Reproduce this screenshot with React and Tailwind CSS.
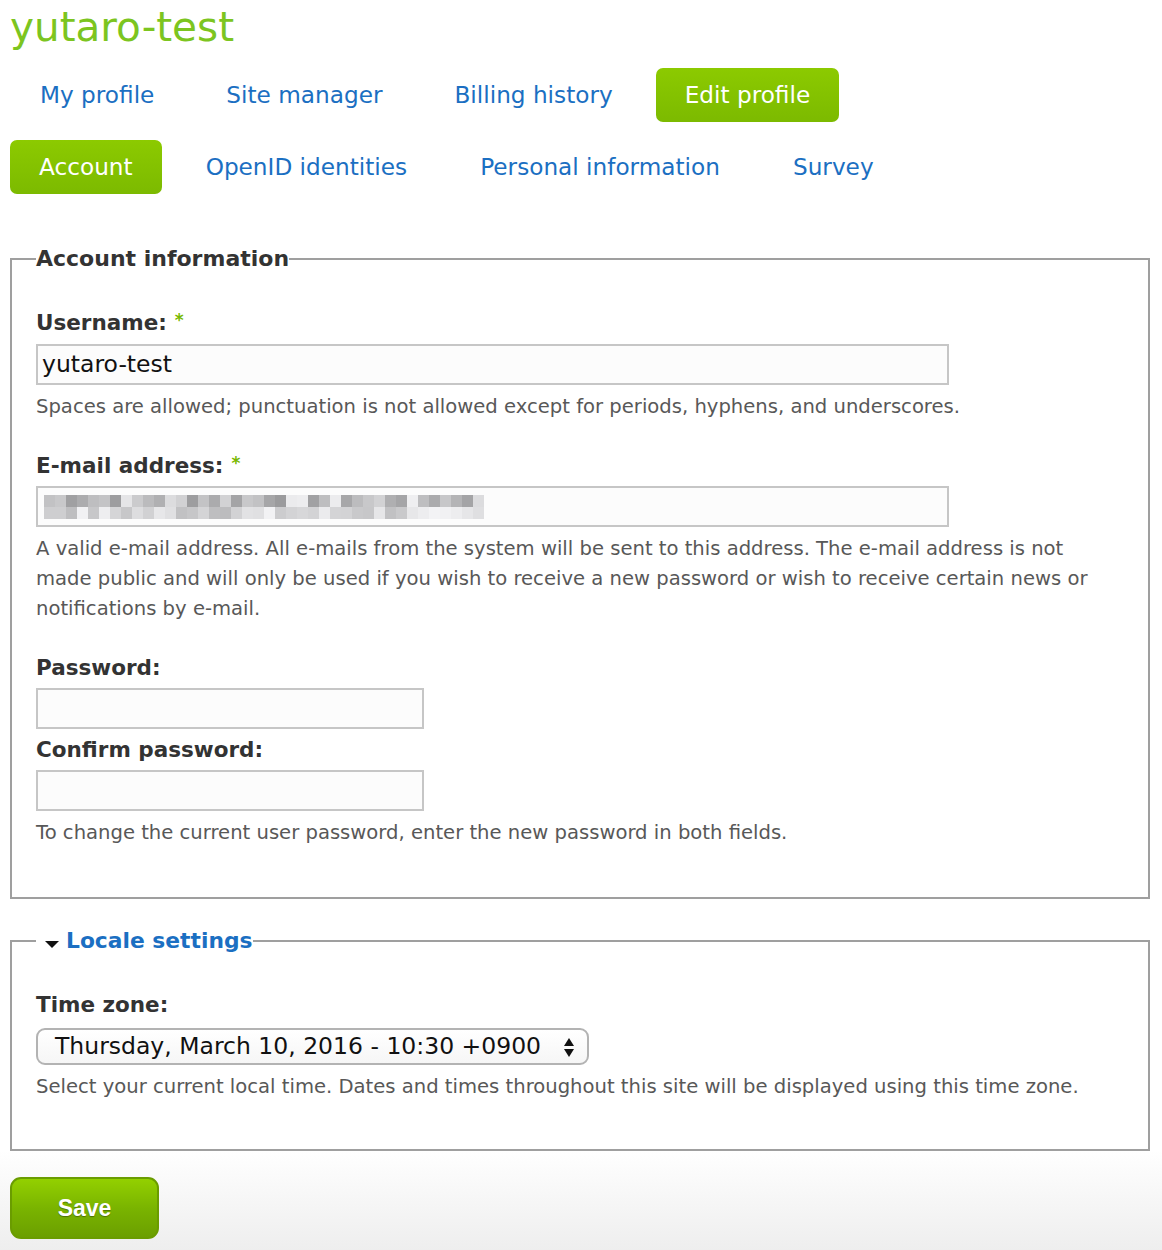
import React from "react";

const font = { fontFamily: '"DejaVu Sans", Verdana, sans-serif' };

function Tab({ label, active }) {
  return active ? (
    <div className="flex h-[54px] items-center rounded-[7px] bg-[linear-gradient(to_bottom,#8cca00,#7cba00)] px-[29px] text-[23.2px] text-white">
      {label}
    </div>
  ) : (
    <div className="flex h-[54px] items-center px-[29px] text-[23.2px] text-[#1b6fc2]">{label}</div>
  );
}

function Label({ children, required }) {
  return (
    <div className="h-[26px] text-[21.5px] font-bold leading-[26px] text-[#333]">
      {children}
      {required && <span className="ml-[8px] align-top text-[17px] leading-[20px] text-[#78b800]">*</span>}
    </div>
  );
}

function Desc({ children, className = "" }) {
  return <div className={"text-[19.6px] leading-[30px] text-[#585858] " + className}>{children}</div>;
}

function TextBox({ width, children }) {
  return (
    <div
      className="flex h-[41px] items-center border-2 border-[#c6c6c6] bg-[#fcfcfc] px-[4px] text-[23.5px] text-[#111]"
      style={{ width }}
    >
      {children}
    </div>
  );
}

function Mosaic() {
  const cells = [];
  let seed = 7;
  const rnd = () => {
    seed = (seed * 9301 + 49297) % 233280;
    return seed / 233280;
  };
  for (let r = 0; r < 2; r++) {
    const row = [];
    for (let c = 0; c < 40; c++) {
      const base = r === 0 ? 150 + rnd() * 90 : 185 + rnd() * 60;
      const v = Math.round(base);
      row.push(<div key={c} className="h-[12px] w-[11px]" style={{ backgroundColor: `rgb(${v},${v},${v + 2})` }} />);
    }
    cells.push(
      <div key={r} className="flex">
        {row}
      </div>
    );
  }
  return <div className="flex flex-col">{cells}</div>;
}

export default function App() {
  return (
    <div
      className="min-h-[1250px] bg-[linear-gradient(to_bottom,#ffffff_1150px,#eeeeee_1250px)] pl-[10px] pr-[12px]"
      style={font}
    >
      <div className="h-[48px] pt-[3px] text-[40.5px] leading-[48px] text-[#7cc520]">yutaro-test</div>

      <div className="mt-[20px] flex gap-[14px] pl-[1px]">
        <Tab label="My profile" />
        <Tab label="Site manager" />
        <Tab label="Billing history" />
        <Tab label="Edit profile" active />
      </div>
      <div className="mt-[18px] flex gap-[15px]">
        <Tab label="Account" active />
        <Tab label="OpenID identities" />
        <Tab label="Personal information" />
        <Tab label="Survey" />
      </div>

      <fieldset className="mt-[52px] border-2 border-[#9f9f9f] px-[24px] pb-[49px] pt-[38px]">
        <legend className="h-[26px] text-[22px] font-bold leading-[26px] text-[#333]">Account information</legend>

        <Label required>Username:</Label>
        <div className="mt-[8px]">
          <TextBox width={913}>yutaro-test</TextBox>
        </div>
        <Desc className="mt-[7px]">
          Spaces are allowed; punctuation is not allowed except for periods, hyphens, and underscores.
        </Desc>

        <div className="mt-[31px]">
          <Label required>E-mail address:</Label>
        </div>
        <div className="mt-[7px]">
          <TextBox width={913}>
            <div className="pl-[2px]">
              <Mosaic />
            </div>
          </TextBox>
        </div>
        <Desc className="mt-[7px]">
          A valid e-mail address. All e-mails from the system will be sent to this address. The e-mail address is not
          made public and will only be used if you wish to receive a new password or wish to receive certain news or
          notifications by e-mail.
        </Desc>

        <div className="mt-[31px]">
          <Label>Password:</Label>
        </div>
        <div className="mt-[7px]">
          <TextBox width={388} />
        </div>
        <div className="mt-[8px]">
          <Label>Confirm password:</Label>
        </div>
        <div className="mt-[7px]">
          <TextBox width={388} />
        </div>
        <Desc className="mt-[7px]">To change the current user password, enter the new password in both fields.</Desc>
      </fieldset>

      <fieldset className="mt-[29px] border-2 border-[#9f9f9f] px-[24px] pb-[47px] pt-[38px]">
        <legend className="flex h-[26px] items-center pl-[9px] text-[21.8px] font-bold leading-[26px] text-[#1b6fc2]">
          <svg width="14" height="10" viewBox="0 0 14 10" className="mr-[7px] mt-[6px]">
            <polygon points="0,2 14,2 7,9" fill="#111" />
          </svg>
          Locale settings
        </legend>

        <Label>Time zone:</Label>
        <div className="mt-[10px] flex h-[37px] w-[553px] items-center justify-between rounded-[9px] border-2 border-[#b3b3b3] bg-[linear-gradient(to_bottom,#ffffff,#f6f6f6)] pl-[17px] pr-[12px] text-[23.5px] text-[#111]">
          <span>Thursday, March 10, 2016 - 10:30 +0900</span>
          <svg width="12" height="22" viewBox="0 0 12 22">
            <polygon points="6,2 11,10 1,10" fill="#111" />
            <polygon points="1,13 11,13 6,21" fill="#111" />
          </svg>
        </div>
        <Desc className="mt-[7px]">
          Select your current local time. Dates and times throughout this site will be displayed using this time zone.
        </Desc>
      </fieldset>

      <button
        className="mt-[26px] flex h-[62px] w-[149px] items-center justify-center rounded-[11px] border-2 border-[#6a9c00] bg-[linear-gradient(to_bottom,#93d000,#7ab400_50%,#6b9f00)] text-[23px] font-bold text-white [text-shadow:0_1px_1px_rgba(0,0,0,0.35)]"
        style={{ fontFamily: '"Liberation Sans", Arial, sans-serif' }}
      >
        Save
      </button>
    </div>
  );
}
